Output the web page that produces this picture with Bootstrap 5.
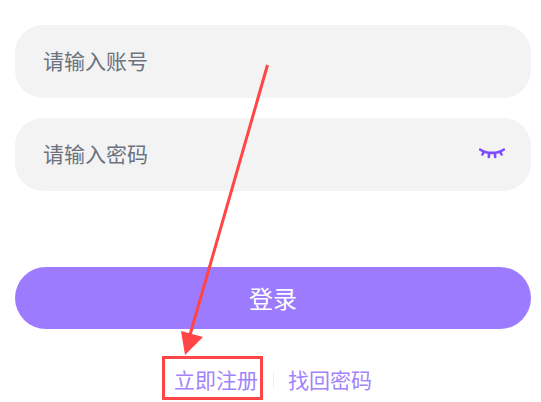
<!DOCTYPE html>
<html lang="zh">
<head>
<meta charset="utf-8">
<title>登录</title>
<link href="https://cdn.jsdelivr.net/npm/bootstrap@5.3.0/dist/css/bootstrap.min.css" rel="stylesheet">
<style>
html,body{height:402px;overflow:hidden;background:#fff}
body{font-family:"Noto Sans CJK SC","Liberation Sans",sans-serif;position:relative}
.stage{padding:25px 10px 0 15px}
.field{height:73px;border-radius:28px;background:#f3f3f3;padding:0 26px 2px 28px;color:#6b7280;font-size:21px;margin-bottom:20px}
.field-two{margin-bottom:76px}
.submit-btn{display:block;width:100%;height:62px;border:0;border-radius:31px;background:#9d7bff;color:#fff;font-size:24px;padding:0}
.links{margin-top:31px;height:40px;font-size:21px;color:#a283fb}
.sep{width:1px;height:18px;background:#f0f0f0;margin:0 14.5px}
.overlay{position:absolute;left:0;top:0;pointer-events:none}
</style>
</head>
<body>
<div class="stage">
  <div class="field d-flex align-items-center justify-content-between">
    <span>请输入账号</span>
  </div>
  <div class="field field-two d-flex align-items-center justify-content-between">
    <span>请输入密码</span>
    <svg width="26" height="12" viewBox="0 0 26 12" fill="none" stroke="#7c4dff" stroke-width="2.600" stroke-linecap="round"><path d="M1 1.500C7 6 19 6 25 1.500M4.500 4.500 3.500 6.500M10 5.500 9.800 9M16 5.500 16.200 9M21.500 4.500 22.500 6.500"/></svg>
  </div>
  <button type="button" class="submit-btn">登录</button>
  <div class="links d-flex align-items-center justify-content-center">
    <span>立即注册</span><span class="sep"></span><span>找回密码</span>
  </div>
</div>
<svg class="overlay" width="541" height="402" viewBox="0 0 541 402" fill="none">
  <path d="M267.500 65 190 335" stroke="#ff4545" stroke-width="3"/>
  <path d="M181 331 203 337 185 355Z" fill="#ff4545"/>
  <rect x="163.500" y="357.500" width="98" height="41" stroke="#ff4545" stroke-width="3"/>
</svg>
</body>
</html>
